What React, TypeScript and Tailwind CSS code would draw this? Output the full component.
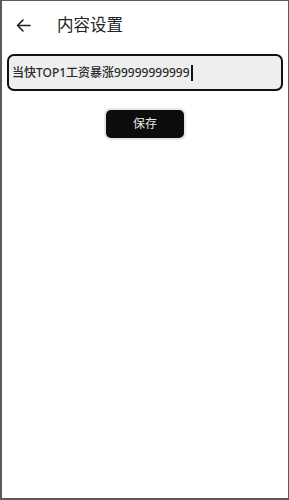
const font = { fontFamily: '"Noto Sans", "Noto Sans CJK SC", sans-serif' };

export default function App() {
  const value = "当快TOP1工资暴涨99999999999";

  return (
    <div
      style={font}
      className="flex h-[500px] w-[289px] flex-col border border-l-2 border-b-2 border-[#5a5a5a] bg-white"
    >
      <header className="flex h-[46px] items-center pt-[2px]">
        <button className="ml-[12px] flex h-6 w-[18px] items-center justify-center text-[#222]">
          <svg width="15" height="13" viewBox="0 0 15 13" fill="none" stroke="currentColor" strokeWidth="1.6" strokeLinecap="round" strokeLinejoin="round">
            <path d="M14 6.5H1.5M7 1L1.5 6.5L7 12" />
          </svg>
        </button>
        <h1 className="ml-[25px] text-[16.5px] leading-none text-[#222]">内容设置</h1>
      </header>

      <div className="mx-[5px] mt-[7px]">
        <div className="flex h-[37px] items-center rounded-[7px] border-2 border-[#111] bg-[#eeeeee] px-[3px]">
          <span className="whitespace-nowrap text-[12px] font-medium text-[#2a2a2a]">{value}</span>
          <span className="ml-[1px] h-[16px] w-[2px] bg-[#111]" />
        </div>
      </div>

      <div className="mt-[19px] flex justify-center">
        <button className="h-[28px] w-[78px] rounded-[5px] bg-[#0d0d0d] text-[12px] text-[#e8e8e8] shadow-[0_0_0_2px_#e6e6e6]">
          保存
        </button>
      </div>
    </div>
  );
}
